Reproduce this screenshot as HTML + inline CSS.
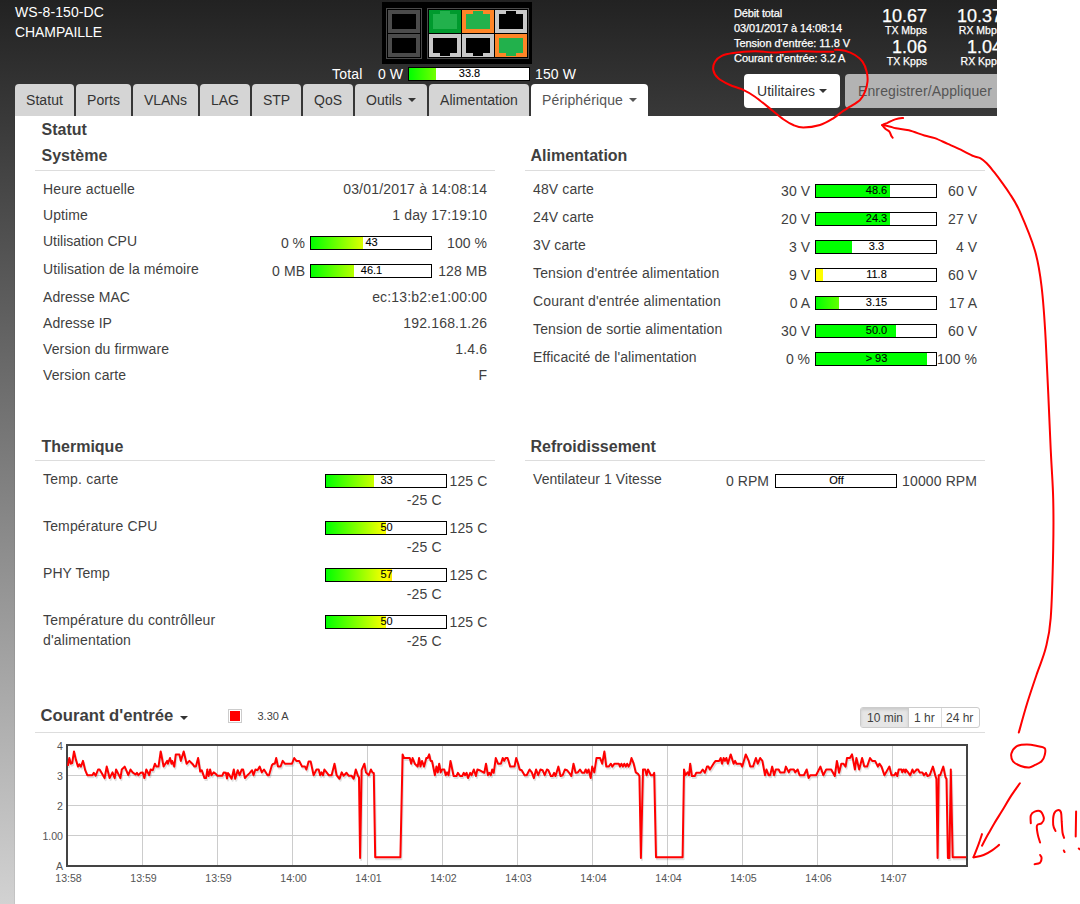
<!DOCTYPE html>
<html><head><meta charset="utf-8">
<style>
*{box-sizing:border-box;margin:0;padding:0}
html,body{width:1080px;height:904px;overflow:hidden;background:#fff}
body{position:relative;font-family:"Liberation Sans",sans-serif;color:#3f3f3f}
.bg{position:absolute;left:0;top:0;width:997px;height:904px;background:linear-gradient(to bottom,#222 0px,#d2d2d2 904px)}
.content{position:absolute;left:15px;top:116px;width:982px;height:788px;background:#fff;box-shadow:-1px 0 0 rgba(0,0,0,0.06)}
.t{position:absolute;white-space:nowrap;line-height:1}
.w{color:#fff;-webkit-text-stroke:0.25px #fff}.w.f14{-webkit-text-stroke:0}
.f14{font-size:14px}.f11{font-size:11px}.f10{font-size:10px}.f16{font-size:16px}.f17{font-size:17px}.f12{font-size:12px}
.b{font-weight:bold}
.r{text-align:right}
.tab{position:absolute;top:84px;height:32px;background:#d5d5d5;border-radius:4px 4px 0 0;font-size:14px;color:#333;text-align:center;line-height:30px;padding-top:1px}
.tab.act{background:#fff;color:#555}
.caret{display:inline-block;width:0;height:0;border-left:4px solid transparent;border-right:4px solid transparent;border-top:4px solid currentColor;vertical-align:middle;margin-left:6px;position:relative;top:-1px}
.port{position:absolute;width:32px;height:23px}
.hr{position:absolute;height:1px;background:#ddd}
.bar{position:absolute;width:122px;height:14px;border:1px solid #000;background:#fff;overflow:hidden}
.fill{position:absolute;left:0;top:0;bottom:0}
.grad{background:linear-gradient(to right,#00ff00 0px,#ffff00 60px,#ff0000 120px);background-size:120px 100%}
.bt{position:absolute;left:0;right:0;top:-1px;padding-left:1px;text-align:center;font-size:11px;line-height:12px;color:#000;-webkit-text-stroke:0.1px #000}
</style></head><body>
<div class="bg"></div>
<div class="content"></div>

<!-- header texts -->
<div class="t w f14" style="left:15px;top:5px;letter-spacing:0.100px">WS-8-150-DC</div>
<div class="t w f14" style="left:15px;top:25px;letter-spacing:-0.070px">CHAMPAILLE</div>

<!-- port graphic -->
<div style="position:absolute;left:382px;top:2px;width:150px;height:62px;background:#000"></div>
<div style="position:absolute;left:386px;top:8px;width:36px;height:51px;border:1px solid #4a4a4a"></div>
<div style="position:absolute;left:427px;top:8px;width:102px;height:51px;border:1px solid #4a4a4a"></div>
<svg style="position:absolute;left:0;top:0" width="540" height="70">
 <!-- SFP -->
 <rect x="388" y="10" width="32" height="23" fill="#4b4b4b"/><rect x="392" y="14" width="24" height="15" fill="#000"/>
 <rect x="388" y="34" width="32" height="23" fill="#4b4b4b"/><rect x="392" y="38" width="24" height="15" fill="#000"/>
 <!-- RJ45 top row -->
 <rect x="429" y="10" width="32" height="23" fill="#009a2e"/><path d="M433 14h7v-3h10v3h7v15h-24z" fill="#22b14c"/>
 <rect x="462" y="10" width="32" height="23" fill="#ff8527"/><path d="M466 14h7v-3h10v3h7v15h-24z" fill="#22b14c"/>
 <rect x="495" y="10" width="32" height="23" fill="#c8c8c8"/><path d="M499 14h7v-3h10v3h7v15h-24z" fill="#000"/>
 <!-- RJ45 bottom row -->
 <rect x="429" y="34" width="32" height="23" fill="#c8c8c8"/><path d="M433 38h24v15h-7v3h-10v-3h-7z" fill="#000"/>
 <rect x="462" y="34" width="32" height="23" fill="#c8c8c8"/><path d="M466 38h24v15h-7v3h-10v-3h-7z" fill="#000"/>
 <rect x="495" y="34" width="32" height="23" fill="#ff8527"/><path d="M499 38h24v15h-7v3h-10v-3h-7z" fill="#22b14c"/>
</svg>

<!-- total power -->
<div class="t w f14" style="left:332px;top:67px;letter-spacing:0.175px">Total</div>
<div class="t w f14" style="left:378px;top:67px;letter-spacing:0.037px">0 W</div>
<div class="bar" style="left:408px;top:67px"><div class="fill grad" style="width:27px"></div><div class="bt">33.8</div></div>
<div class="t w f14" style="left:535px;top:67px;letter-spacing:0.108px">150 W</div>

<!-- right info -->
<div class="t w f11" style="left:734px;top:8px;letter-spacing:-0.139px">Débit total</div>
<div class="t w f11" style="left:734px;top:23px;letter-spacing:-0.100px">03/01/2017 à 14:08:14</div>
<div class="t w f11" style="left:734px;top:38px;letter-spacing:-0.063px">Tension d'entrée: 11.8 V</div>
<div class="t w f11" style="left:734px;top:53px;letter-spacing:-0.061px">Courant d'entrée: 3.2 A</div>

<div class="t w r" style="right:153px;top:7px;font-size:18px">10.67</div>
<div class="t w r" style="right:153px;top:25px;font-size:10.5px">TX Mbps</div>
<div class="t w r" style="right:153px;top:38px;font-size:18px">1.06</div>
<div class="t w r" style="right:153px;top:56px;font-size:10.5px">TX Kpps</div>
<div style="position:absolute;left:940px;top:0;width:57px;height:116px;overflow:hidden">
<div class="t w r" style="right:-5px;top:7px;font-size:18px">10.37</div>
<div class="t w r" style="right:-5px;top:25px;font-size:10.5px">RX Mbps</div>
<div class="t w r" style="right:-5px;top:38px;font-size:18px">1.04</div>
<div class="t w r" style="right:-5px;top:56px;font-size:10.5px">RX Kpps</div>
</div>

<!-- buttons -->
<div style="position:absolute;left:744px;top:74px;width:96px;height:34px;background:#fff;border-radius:4px"></div>
<div class="t f14" style="left:757px;top:84px;color:#333;letter-spacing:0.040px">Utilitaires<span class="caret" style="margin-left:4px"></span></div>
<div style="position:absolute;left:845px;top:74px;width:152px;height:34px;background:#b3b3b3;border-radius:4px 0 0 4px;overflow:hidden"><div class="t f14" style="left:13px;top:10px;color:#555;letter-spacing:0.119px">Enregistrer/Appliquer</div></div>

<!-- tabs -->
<div class="tab" style="left:15px;width:59px;letter-spacing:0.070px">Statut</div>
<div class="tab" style="left:76px;width:55px;letter-spacing:0.065px">Ports</div>
<div class="tab" style="left:133px;width:65px;letter-spacing:-0.114px">VLANs</div>
<div class="tab" style="left:200px;width:50px;letter-spacing:-0.005px">LAG</div>
<div class="tab" style="left:252px;width:49px;letter-spacing:-0.076px">STP</div>
<div class="tab" style="left:303px;width:50px;letter-spacing:-0.005px">QoS</div>
<div class="tab" style="left:355px;width:72px;letter-spacing:0.036px">Outils<span class="caret"></span></div>
<div class="tab" style="left:429px;width:100px;letter-spacing:0.080px">Alimentation</div>
<div class="tab act" style="left:531px;width:117px;letter-spacing:0.135px">Périphérique<span class="caret"></span></div>

<!-- CONTENT -->
<!--SECTIONS-->
<div class="t f16 b" style="top:122px;left:41.5px;">Statut</div>
<div class="t f16 b" style="top:148px;left:41.5px;">Système</div>
<div class="hr" style="left:35px;top:170px;width:460px"></div>
<div class="t f14" style="top:182px;left:43px;letter-spacing:0.123px;">Heure actuelle</div>
<div class="t f14" style="top:182px;right:593px;letter-spacing:0.184px;margin-right:-0.184px;">03/01/2017 à 14:08:14</div>
<div class="t f14" style="top:208px;left:43px;letter-spacing:0.109px;">Uptime</div>
<div class="t f14" style="top:208px;right:593px;letter-spacing:0.169px;margin-right:-0.169px;">1 day 17:19:10</div>
<div class="t f14" style="top:234px;left:43px;letter-spacing:-0.009px;">Utilisation CPU</div>
<div class="t f14" style="top:236px;right:775px;letter-spacing:-0.041px;margin-right:0.041px;">0 %</div>
<div class="bar" style="left:310px;top:236px"><div class="fill grad" style="width:52px"></div><div class="bt">43</div></div>
<div class="t f14" style="top:236px;right:593px;letter-spacing:0.061px;margin-right:-0.061px;">100 %</div>
<div class="t f14" style="top:262px;left:43px;letter-spacing:0.109px;">Utilisation de la mémoire</div>
<div class="t f14" style="top:264px;right:775px;letter-spacing:0.081px;margin-right:-0.081px;">0 MB</div>
<div class="bar" style="left:310px;top:264px"><div class="fill grad" style="width:43px"></div><div class="bt">46.1</div></div>
<div class="t f14" style="top:264px;right:593px;letter-spacing:0.125px;margin-right:-0.125px;">128 MB</div>
<div class="t f14" style="top:290px;left:43px;letter-spacing:0.058px;">Adresse MAC</div>
<div class="t f14" style="top:290px;right:593px;letter-spacing:0.171px;margin-right:-0.171px;">ec:13:b2:e1:00:00</div>
<div class="t f14" style="top:316px;left:43px;letter-spacing:0.052px;">Adresse IP</div>
<div class="t f14" style="top:316px;right:593px;letter-spacing:0.188px;margin-right:-0.188px;">192.168.1.26</div>
<div class="t f14" style="top:342px;left:43px;letter-spacing:0.132px;">Version du firmware</div>
<div class="t f14" style="top:342px;right:593px;letter-spacing:0.172px;margin-right:-0.172px;">1.4.6</div>
<div class="t f14" style="top:368px;left:43px;letter-spacing:0.117px;">Version carte</div>
<div class="t f14" style="top:368px;right:593px;letter-spacing:0.448px;margin-right:-0.448px;">F</div>
<div class="t f16 b" style="top:148px;left:530.5px;">Alimentation</div>
<div class="hr" style="left:525px;top:170px;width:460px"></div>
<div class="t f14" style="top:182px;left:533px;letter-spacing:0.120px;">48V carte</div>
<div class="t f14" style="top:184px;right:270px;letter-spacing:0.050px;margin-right:-0.050px;">30 V</div>
<div class="bar" style="left:815px;top:184px"><div class="fill" style="width:74px;background:#00ff00"></div><div class="bt">48.6</div></div>
<div class="t f14" style="top:184px;right:103px;letter-spacing:0.050px;margin-right:-0.050px;">60 V</div>
<div class="t f14" style="top:210px;left:533px;letter-spacing:0.120px;">24V carte</div>
<div class="t f14" style="top:212px;right:270px;letter-spacing:0.050px;margin-right:-0.050px;">20 V</div>
<div class="bar" style="left:815px;top:212px"><div class="fill" style="width:74px;background:#00ff00"></div><div class="bt">24.3</div></div>
<div class="t f14" style="top:212px;right:103px;letter-spacing:0.050px;margin-right:-0.050px;">27 V</div>
<div class="t f14" style="top:238px;left:533px;letter-spacing:0.108px;">3V carte</div>
<div class="t f14" style="top:240px;right:270px;letter-spacing:-0.005px;margin-right:0.005px;">3 V</div>
<div class="bar" style="left:815px;top:240px"><div class="fill" style="width:36px;background:#00ff00"></div><div class="bt">3.3</div></div>
<div class="t f14" style="top:240px;right:103px;letter-spacing:-0.005px;margin-right:0.005px;">4 V</div>
<div class="t f14" style="top:266px;left:533px;letter-spacing:0.164px;">Tension d'entrée alimentation</div>
<div class="t f14" style="top:268px;right:270px;letter-spacing:-0.005px;margin-right:0.005px;">9 V</div>
<div class="bar" style="left:815px;top:268px"><div class="fill" style="width:7px;background:#ffff00"></div><div class="bt">11.8</div></div>
<div class="t f14" style="top:268px;right:103px;letter-spacing:0.050px;margin-right:-0.050px;">60 V</div>
<div class="t f14" style="top:294px;left:533px;letter-spacing:0.164px;">Courant d'entrée alimentation</div>
<div class="t f14" style="top:296px;right:270px;letter-spacing:-0.005px;margin-right:0.005px;">0 A</div>
<div class="bar" style="left:815px;top:296px"><div class="fill grad" style="width:23px"></div><div class="bt">3.15</div></div>
<div class="t f14" style="top:296px;right:103px;letter-spacing:0.050px;margin-right:-0.050px;">17 A</div>
<div class="t f14" style="top:322px;left:533px;letter-spacing:0.141px;">Tension de sortie alimentation</div>
<div class="t f14" style="top:324px;right:270px;letter-spacing:0.050px;margin-right:-0.050px;">30 V</div>
<div class="bar" style="left:815px;top:324px"><div class="fill" style="width:80px;background:#00ff00"></div><div class="bt">50.0</div></div>
<div class="t f14" style="top:324px;right:103px;letter-spacing:0.050px;margin-right:-0.050px;">60 V</div>
<div class="t f14" style="top:350px;left:533px;letter-spacing:0.092px;">Efficacité de l'alimentation</div>
<div class="t f14" style="top:352px;right:270px;letter-spacing:-0.041px;margin-right:0.041px;">0 %</div>
<div class="bar" style="left:815px;top:352px"><div class="fill" style="width:111px;background:#00ff00"></div><div class="bt">&gt; 93</div></div>
<div class="t f14" style="top:352px;right:103px;letter-spacing:0.061px;margin-right:-0.061px;">100 %</div>
<div class="t f16 b" style="top:439px;left:41.5px;">Thermique</div>
<div class="hr" style="left:35px;top:460px;width:460px"></div>
<div class="t f14" style="top:472px;left:43px;letter-spacing:0.210px;">Temp. carte</div>
<div class="bar" style="left:325px;top:474px"><div class="fill grad" style="width:48px"></div><div class="bt">33</div></div>
<div class="t f14" style="top:474px;left:449.5px;letter-spacing:0.128px;">125 C</div>
<div class="t f14" style="top:493px;right:638.5px;letter-spacing:0.153px;margin-right:-0.153px;">-25 C</div>
<div class="t f14" style="top:519px;left:43px;letter-spacing:0.160px;">Température CPU</div>
<div class="bar" style="left:325px;top:521px"><div class="fill grad" style="width:60px"></div><div class="bt">50</div></div>
<div class="t f14" style="top:521px;left:449.5px;letter-spacing:0.128px;">125 C</div>
<div class="t f14" style="top:540px;right:638.5px;letter-spacing:0.153px;margin-right:-0.153px;">-25 C</div>
<div class="t f14" style="top:566px;left:43px;letter-spacing:0.067px;">PHY Temp</div>
<div class="bar" style="left:325px;top:568px"><div class="fill grad" style="width:66px"></div><div class="bt">57</div></div>
<div class="t f14" style="top:568px;left:449.5px;letter-spacing:0.128px;">125 C</div>
<div class="t f14" style="top:587px;right:638.5px;letter-spacing:0.153px;margin-right:-0.153px;">-25 C</div>
<div class="t f14" style="top:613px;left:43px;letter-spacing:0.198px;">Température du contrôlleur</div>
<div class="bar" style="left:325px;top:615px"><div class="fill grad" style="width:60px"></div><div class="bt">50</div></div>
<div class="t f14" style="top:615px;left:449.5px;letter-spacing:0.128px;">125 C</div>
<div class="t f14" style="top:634px;right:638.5px;letter-spacing:0.153px;margin-right:-0.153px;">-25 C</div>
<div class="t f14" style="top:633px;left:43px;letter-spacing:0.147px;">d'alimentation</div>
<div class="t f16 b" style="top:439px;left:530.5px;">Refroidissement</div>
<div class="hr" style="left:525px;top:460px;width:460px"></div>
<div class="t f14" style="top:472px;left:533px;letter-spacing:0.076px;">Ventilateur 1 Vitesse</div>
<div class="t f14" style="top:474px;right:311px;letter-spacing:0.043px;margin-right:-0.043px;">0 RPM</div>
<div class="bar" style="left:775px;top:474px"><div class="bt">Off</div></div>
<div class="t f14" style="top:474px;right:103px;letter-spacing:0.119px;margin-right:-0.119px;">10000 RPM</div>
<!--/SECTIONS-->
<!--CHART-->
<div class="t f17 b" style="top:708px;left:40.5px;font-size:16.7px;">Courant d'entrée</div>
<div style="position:absolute;left:180px;top:716px;width:0;height:0;border-left:4px solid transparent;border-right:4px solid transparent;border-top:4px solid #333"></div>
<div style="position:absolute;left:228px;top:709px;width:14px;height:14px;border:1px solid #ccc;background:#fff"><div style="position:absolute;left:1px;top:1px;width:10px;height:10px;background:#f00"></div></div>
<div class="t f11" style="top:711px;left:257.5px;">3.30 A</div>
<div class="hr" style="left:35px;top:732px;width:950px"></div>
<div style="position:absolute;left:860px;top:707px;width:120px;height:21px;border:1px solid #ccc;border-radius:3px;background:#fff;overflow:hidden"><div style="position:absolute;left:0;top:0;width:48px;height:19px;background:#e6e6e6;box-shadow:inset 0 2px 3px rgba(0,0,0,.12);border-right:1px solid #ccc"></div><div style="position:absolute;left:80px;top:0;width:1px;height:19px;background:#ddd"></div></div>
<div class="t f12" style="top:712px;left:867px;">10 min</div>
<div class="t f12" style="top:712px;left:914px;">1 hr</div>
<div class="t f12" style="top:712px;left:946px;">24 hr</div>
<div class="t f11" style="top:741px;right:1017px;color:#555;font-size:10.6px;">4</div>
<div class="t f11" style="top:771px;right:1017px;color:#555;font-size:10.6px;">3</div>
<div class="t f11" style="top:801px;right:1017px;color:#555;font-size:10.6px;">2</div>
<div class="t f11" style="top:831px;right:1017px;color:#555;font-size:10.6px;">1.00</div>
<div class="t f11" style="top:861px;right:1017px;color:#555;font-size:10.6px;">A</div>
<div class="t" style="font-size:10.6px;left:38.5px;width:60px;text-align:center;top:873px;color:#555">13:58</div>
<div class="t" style="font-size:10.6px;left:113.5px;width:60px;text-align:center;top:873px;color:#555">13:59</div>
<div class="t" style="font-size:10.6px;left:188.5px;width:60px;text-align:center;top:873px;color:#555">13:59</div>
<div class="t" style="font-size:10.6px;left:263.5px;width:60px;text-align:center;top:873px;color:#555">14:00</div>
<div class="t" style="font-size:10.6px;left:338.5px;width:60px;text-align:center;top:873px;color:#555">14:01</div>
<div class="t" style="font-size:10.6px;left:413.5px;width:60px;text-align:center;top:873px;color:#555">14:02</div>
<div class="t" style="font-size:10.6px;left:488.5px;width:60px;text-align:center;top:873px;color:#555">14:03</div>
<div class="t" style="font-size:10.6px;left:563.5px;width:60px;text-align:center;top:873px;color:#555">14:04</div>
<div class="t" style="font-size:10.6px;left:638.5px;width:60px;text-align:center;top:873px;color:#555">14:04</div>
<div class="t" style="font-size:10.6px;left:713.5px;width:60px;text-align:center;top:873px;color:#555">14:05</div>
<div class="t" style="font-size:10.6px;left:788.5px;width:60px;text-align:center;top:873px;color:#555">14:06</div>
<div class="t" style="font-size:10.6px;left:863.5px;width:60px;text-align:center;top:873px;color:#555">14:07</div>
<svg style="position:absolute;left:0;top:0" width="1080" height="904">
<line x1="68" y1="775.5" x2="966" y2="775.5" stroke="#ccc" stroke-width="1"/>
<line x1="68" y1="805.5" x2="966" y2="805.5" stroke="#ccc" stroke-width="1"/>
<line x1="68" y1="835.5" x2="966" y2="835.5" stroke="#ccc" stroke-width="1"/>
<line x1="142.5" y1="746" x2="142.5" y2="865" stroke="#ccc" stroke-width="1"/>
<line x1="217.5" y1="746" x2="217.5" y2="865" stroke="#ccc" stroke-width="1"/>
<line x1="292.5" y1="746" x2="292.5" y2="865" stroke="#ccc" stroke-width="1"/>
<line x1="367.5" y1="746" x2="367.5" y2="865" stroke="#ccc" stroke-width="1"/>
<line x1="442.5" y1="746" x2="442.5" y2="865" stroke="#ccc" stroke-width="1"/>
<line x1="517.5" y1="746" x2="517.5" y2="865" stroke="#ccc" stroke-width="1"/>
<line x1="592.5" y1="746" x2="592.5" y2="865" stroke="#ccc" stroke-width="1"/>
<line x1="667.5" y1="746" x2="667.5" y2="865" stroke="#ccc" stroke-width="1"/>
<line x1="742.5" y1="746" x2="742.5" y2="865" stroke="#ccc" stroke-width="1"/>
<line x1="817.5" y1="746" x2="817.5" y2="865" stroke="#ccc" stroke-width="1"/>
<line x1="892.5" y1="746" x2="892.5" y2="865" stroke="#ccc" stroke-width="1"/>
<rect x="67" y="745" width="900" height="121" fill="none" stroke="#444" stroke-width="2"/>
<path d="M67.9,765.9 L69.3,758.0 L70.8,763.7 L72.2,763.0 L74.0,751.5 L75.8,759.4 L78.0,766.6 L79.4,764.4 L80.9,766.6 L83.0,760.9 L85.2,770.2 L87.3,775.2 L92.4,775.2 L93.8,772.8 L95.7,775.7 L98.1,769.5 L99.6,769.5 L104.6,778.1 L106.7,766.6 L109.6,778.1 L112.5,772.4 L114.7,778.1 L116.1,769.5 L120.4,778.1 L121.8,769.5 L124.7,766.6 L128.3,775.2 L130.5,769.5 L132.6,772.4 L135.5,774.5 L136.9,772.8 L138.4,775.2 L140.5,772.8 L142.7,772.4 L144.4,778.1 L146.3,769.5 L149.2,775.2 L150.6,769.5 L152.8,770.2 L154.9,763.7 L156.4,766.6 L158.5,766.6 L160.7,751.5 L163.6,766.6 L167.1,760.9 L167.9,763.7 L170.0,758.0 L171.5,763.7 L172.2,760.9 L174.3,766.6 L175.8,754.4 L179.4,754.4 L180.8,760.9 L183.7,751.5 L186.6,763.7 L189.4,760.9 L192.3,763.7 L194.5,766.6 L195.9,766.6 L198.1,758.0 L200.2,771.6 L201.7,770.2 L204.5,778.1 L206.0,778.1 L207.4,769.5 L207.2,770.2 L208.6,776.0 L210.1,769.5 L211.5,775.2 L213.7,772.4 L215.8,773.8 L217.3,775.7 L222.3,775.7 L223.7,772.4 L225.9,772.8 L227.0,778.5 L228.0,773.1 L229.5,775.2 L231.6,778.8 L233.8,769.5 L235.2,778.8 L237.7,770.2 L239.6,775.2 L241.7,769.5 L243.1,769.5 L244.9,778.1 L247.5,775.2 L249.6,773.1 L252.1,770.2 L253.5,775.2 L255.4,769.5 L257.5,770.2 L259.7,766.6 L261.8,772.4 L264.0,769.5 L267.6,775.2 L269.0,775.2 L271.9,765.2 L273.3,763.7 L274.8,763.7 L276.2,758.0 L278.0,766.6 L280.5,766.6 L282.7,760.9 L284.9,763.7 L292.0,763.7 L294.2,758.0 L296.4,760.9 L299.2,760.9 L302.1,766.6 L305.0,766.6 L306.4,769.5 L308.6,761.6 L310.7,761.6 L313.6,775.2 L316.5,769.5 L318.7,769.5 L320.1,775.2 L321.5,772.4 L323.0,775.2 L324.4,769.5 L326.6,772.4 L328.7,775.2 L331.6,775.2 L334.5,763.7 L336.6,775.2 L339.5,778.8 L341.7,772.4 L342.2,773.1 L343.6,775.7 L346.5,772.8 L348.6,775.7 L351.5,775.7 L353.7,778.8 L355.8,769.5 L358.0,776.0 L359.0,777.4 L360.1,857.9 L361.6,770.2 L364.4,763.7 L365.9,772.4 L368.8,775.2 L370.9,769.5 L372.4,772.4 L373.8,773.1 L375.2,857.2 L400.4,857.2 L402.6,754.4 L404.0,758.0 L409.8,758.0 L411.2,763.7 L412.6,758.0 L414.8,763.7 L417.7,766.6 L419.1,758.0 L420.5,766.6 L422.0,760.9 L424.1,766.6 L426.3,758.0 L427.7,758.0 L429.2,754.4 L430.6,760.9 L432.0,760.9 L434.9,775.2 L436.4,766.6 L437.8,772.4 L439.2,763.7 L440.7,772.4 L442.1,769.5 L444.3,769.5 L445.7,775.2 L447.1,772.4 L448.6,775.2 L450.5,760.9 L453.6,776.0 L456.5,776.0 L457.9,772.8 L460.1,776.0 L462.2,776.0 L463.7,772.8 L465.1,775.2 L466.6,772.8 L468.0,778.1 L470.2,772.8 L471.6,775.2 L473.8,769.5 L475.9,776.0 L477.4,769.5 L479.5,770.2 L484.3,772.8 L486.0,763.7 L487.9,775.2 L489.3,772.8 L490.8,775.2 L492.2,769.5 L493.7,772.8 L495.8,758.0 L498.0,763.7 L500.9,763.7 L502.7,758.0 L504.2,760.9 L505.6,758.0 L507.6,758.0 L510.2,766.6 L514.5,766.6 L516.2,758.0 L518.1,763.7 L519.6,769.5 L521.7,770.2 L524.6,775.2 L526.7,775.2 L529.6,769.5 L531.8,772.4 L533.9,778.1 L536.1,769.5 L538.2,775.2 L540.4,769.5 L542.6,770.2 L544.7,775.2 L546.9,769.5 L548.3,770.2 L550.8,776.0 L552.6,776.0 L554.1,772.8 L555.5,776.0 L558.4,766.6 L560.5,776.0 L562.7,775.2 L564.9,769.5 L567.0,770.2 L569.2,772.8 L571.3,776.0 L573.5,763.7 L575.6,772.8 L577.8,772.4 L580.0,769.5 L582.1,772.8 L584.3,772.8 L585.7,769.5 L587.1,772.8 L588.6,769.5 L590.7,778.1 L592.2,766.6 L594.3,772.4 L596.5,758.0 L600.1,758.0 L602.2,763.7 L604.4,751.5 L606.3,766.6 L608.7,766.6 L610.9,763.7 L612.3,766.6 L614.5,763.7 L618.8,763.7 L620.0,766.6 L621.4,763.7 L622.9,766.6 L624.3,763.7 L625.8,766.6 L627.2,763.7 L628.6,766.6 L630.1,763.7 L631.5,758.0 L633.7,763.7 L635.8,772.4 L638.0,773.8 L639.4,776.0 L640.9,857.9 L643.0,769.5 L645.2,769.5 L646.6,775.2 L648.0,769.5 L650.9,775.2 L653.1,775.2 L654.2,772.8 L656.0,857.2 L682.6,857.2 L684.0,769.5 L685.4,775.2 L687.6,772.4 L689.0,775.2 L690.2,763.7 L691.9,776.0 L694.8,776.0 L696.2,772.8 L700.5,772.8 L702.7,769.5 L704.9,772.8 L707.0,766.6 L708.5,766.6 L709.9,769.5 L713.5,763.7 L715.6,760.9 L719.2,760.9 L720.7,758.0 L722.1,763.7 L723.6,758.0 L725.0,760.9 L726.4,758.0 L727.9,763.7 L730.7,754.4 L733.6,763.7 L735.1,760.9 L736.5,763.7 L740.8,763.7 L742.2,766.6 L745.8,754.4 L748.7,760.9 L750.2,766.6 L753.0,766.6 L755.9,758.0 L757.8,763.7 L760.2,758.0 L762.4,760.9 L762.9,763.7 L765.0,775.2 L766.5,769.5 L768.6,775.2 L770.1,775.2 L772.2,766.6 L774.1,775.2 L775.8,769.5 L778.7,769.5 L780.1,772.4 L784.4,772.4 L785.9,766.6 L788.8,772.4 L790.2,769.5 L793.8,769.5 L795.2,772.4 L797.7,769.5 L799.6,775.2 L803.9,775.2 L806.7,769.5 L808.6,778.1 L810.3,775.2 L816.1,775.2 L820.4,766.6 L823.3,775.2 L826.2,769.5 L831.2,769.5 L834.8,776.0 L836.9,760.9 L839.1,772.8 L841.3,763.7 L843.4,763.7 L845.6,766.6 L847.0,758.0 L849.9,758.0 L852.0,754.4 L854.9,769.5 L856.4,758.0 L859.2,769.5 L862.1,758.0 L864.3,766.6 L867.1,766.6 L870.0,758.0 L872.2,760.9 L875.1,760.9 L877.9,766.6 L879.4,763.7 L881.5,766.6 L884.4,775.2 L889.4,766.6 L889.4,766.6 L891.5,775.3 L894.4,775.3 L895.8,772.8 L897.3,776.0 L898.7,769.5 L901.6,769.5 L902.3,772.4 L903.7,769.5 L905.2,772.4 L905.9,769.5 L908.1,772.4 L910.2,775.3 L912.4,769.5 L913.8,772.8 L916.7,769.5 L918.1,769.5 L919.6,772.4 L922.4,772.4 L923.9,775.3 L926.0,772.8 L927.5,776.0 L929.6,775.3 L932.9,766.6 L935.4,776.0 L936.4,778.8 L937.6,858.0 L938.7,775.3 L940.1,775.3 L943.3,766.6 L945.5,777.4 L946.5,778.8 L947.9,858.0 L949.4,858.0 L950.8,769.5 L952.7,857.3 L966.3,857.3" fill="none" stroke="rgba(0,0,0,0.12)" stroke-width="2" transform="translate(1,2)" stroke-linejoin="round"/>
<path d="M67.9,765.9 L69.3,758.0 L70.8,763.7 L72.2,763.0 L74.0,751.5 L75.8,759.4 L78.0,766.6 L79.4,764.4 L80.9,766.6 L83.0,760.9 L85.2,770.2 L87.3,775.2 L92.4,775.2 L93.8,772.8 L95.7,775.7 L98.1,769.5 L99.6,769.5 L104.6,778.1 L106.7,766.6 L109.6,778.1 L112.5,772.4 L114.7,778.1 L116.1,769.5 L120.4,778.1 L121.8,769.5 L124.7,766.6 L128.3,775.2 L130.5,769.5 L132.6,772.4 L135.5,774.5 L136.9,772.8 L138.4,775.2 L140.5,772.8 L142.7,772.4 L144.4,778.1 L146.3,769.5 L149.2,775.2 L150.6,769.5 L152.8,770.2 L154.9,763.7 L156.4,766.6 L158.5,766.6 L160.7,751.5 L163.6,766.6 L167.1,760.9 L167.9,763.7 L170.0,758.0 L171.5,763.7 L172.2,760.9 L174.3,766.6 L175.8,754.4 L179.4,754.4 L180.8,760.9 L183.7,751.5 L186.6,763.7 L189.4,760.9 L192.3,763.7 L194.5,766.6 L195.9,766.6 L198.1,758.0 L200.2,771.6 L201.7,770.2 L204.5,778.1 L206.0,778.1 L207.4,769.5 L207.2,770.2 L208.6,776.0 L210.1,769.5 L211.5,775.2 L213.7,772.4 L215.8,773.8 L217.3,775.7 L222.3,775.7 L223.7,772.4 L225.9,772.8 L227.0,778.5 L228.0,773.1 L229.5,775.2 L231.6,778.8 L233.8,769.5 L235.2,778.8 L237.7,770.2 L239.6,775.2 L241.7,769.5 L243.1,769.5 L244.9,778.1 L247.5,775.2 L249.6,773.1 L252.1,770.2 L253.5,775.2 L255.4,769.5 L257.5,770.2 L259.7,766.6 L261.8,772.4 L264.0,769.5 L267.6,775.2 L269.0,775.2 L271.9,765.2 L273.3,763.7 L274.8,763.7 L276.2,758.0 L278.0,766.6 L280.5,766.6 L282.7,760.9 L284.9,763.7 L292.0,763.7 L294.2,758.0 L296.4,760.9 L299.2,760.9 L302.1,766.6 L305.0,766.6 L306.4,769.5 L308.6,761.6 L310.7,761.6 L313.6,775.2 L316.5,769.5 L318.7,769.5 L320.1,775.2 L321.5,772.4 L323.0,775.2 L324.4,769.5 L326.6,772.4 L328.7,775.2 L331.6,775.2 L334.5,763.7 L336.6,775.2 L339.5,778.8 L341.7,772.4 L342.2,773.1 L343.6,775.7 L346.5,772.8 L348.6,775.7 L351.5,775.7 L353.7,778.8 L355.8,769.5 L358.0,776.0 L359.0,777.4 L360.1,857.9 L361.6,770.2 L364.4,763.7 L365.9,772.4 L368.8,775.2 L370.9,769.5 L372.4,772.4 L373.8,773.1 L375.2,857.2 L400.4,857.2 L402.6,754.4 L404.0,758.0 L409.8,758.0 L411.2,763.7 L412.6,758.0 L414.8,763.7 L417.7,766.6 L419.1,758.0 L420.5,766.6 L422.0,760.9 L424.1,766.6 L426.3,758.0 L427.7,758.0 L429.2,754.4 L430.6,760.9 L432.0,760.9 L434.9,775.2 L436.4,766.6 L437.8,772.4 L439.2,763.7 L440.7,772.4 L442.1,769.5 L444.3,769.5 L445.7,775.2 L447.1,772.4 L448.6,775.2 L450.5,760.9 L453.6,776.0 L456.5,776.0 L457.9,772.8 L460.1,776.0 L462.2,776.0 L463.7,772.8 L465.1,775.2 L466.6,772.8 L468.0,778.1 L470.2,772.8 L471.6,775.2 L473.8,769.5 L475.9,776.0 L477.4,769.5 L479.5,770.2 L484.3,772.8 L486.0,763.7 L487.9,775.2 L489.3,772.8 L490.8,775.2 L492.2,769.5 L493.7,772.8 L495.8,758.0 L498.0,763.7 L500.9,763.7 L502.7,758.0 L504.2,760.9 L505.6,758.0 L507.6,758.0 L510.2,766.6 L514.5,766.6 L516.2,758.0 L518.1,763.7 L519.6,769.5 L521.7,770.2 L524.6,775.2 L526.7,775.2 L529.6,769.5 L531.8,772.4 L533.9,778.1 L536.1,769.5 L538.2,775.2 L540.4,769.5 L542.6,770.2 L544.7,775.2 L546.9,769.5 L548.3,770.2 L550.8,776.0 L552.6,776.0 L554.1,772.8 L555.5,776.0 L558.4,766.6 L560.5,776.0 L562.7,775.2 L564.9,769.5 L567.0,770.2 L569.2,772.8 L571.3,776.0 L573.5,763.7 L575.6,772.8 L577.8,772.4 L580.0,769.5 L582.1,772.8 L584.3,772.8 L585.7,769.5 L587.1,772.8 L588.6,769.5 L590.7,778.1 L592.2,766.6 L594.3,772.4 L596.5,758.0 L600.1,758.0 L602.2,763.7 L604.4,751.5 L606.3,766.6 L608.7,766.6 L610.9,763.7 L612.3,766.6 L614.5,763.7 L618.8,763.7 L620.0,766.6 L621.4,763.7 L622.9,766.6 L624.3,763.7 L625.8,766.6 L627.2,763.7 L628.6,766.6 L630.1,763.7 L631.5,758.0 L633.7,763.7 L635.8,772.4 L638.0,773.8 L639.4,776.0 L640.9,857.9 L643.0,769.5 L645.2,769.5 L646.6,775.2 L648.0,769.5 L650.9,775.2 L653.1,775.2 L654.2,772.8 L656.0,857.2 L682.6,857.2 L684.0,769.5 L685.4,775.2 L687.6,772.4 L689.0,775.2 L690.2,763.7 L691.9,776.0 L694.8,776.0 L696.2,772.8 L700.5,772.8 L702.7,769.5 L704.9,772.8 L707.0,766.6 L708.5,766.6 L709.9,769.5 L713.5,763.7 L715.6,760.9 L719.2,760.9 L720.7,758.0 L722.1,763.7 L723.6,758.0 L725.0,760.9 L726.4,758.0 L727.9,763.7 L730.7,754.4 L733.6,763.7 L735.1,760.9 L736.5,763.7 L740.8,763.7 L742.2,766.6 L745.8,754.4 L748.7,760.9 L750.2,766.6 L753.0,766.6 L755.9,758.0 L757.8,763.7 L760.2,758.0 L762.4,760.9 L762.9,763.7 L765.0,775.2 L766.5,769.5 L768.6,775.2 L770.1,775.2 L772.2,766.6 L774.1,775.2 L775.8,769.5 L778.7,769.5 L780.1,772.4 L784.4,772.4 L785.9,766.6 L788.8,772.4 L790.2,769.5 L793.8,769.5 L795.2,772.4 L797.7,769.5 L799.6,775.2 L803.9,775.2 L806.7,769.5 L808.6,778.1 L810.3,775.2 L816.1,775.2 L820.4,766.6 L823.3,775.2 L826.2,769.5 L831.2,769.5 L834.8,776.0 L836.9,760.9 L839.1,772.8 L841.3,763.7 L843.4,763.7 L845.6,766.6 L847.0,758.0 L849.9,758.0 L852.0,754.4 L854.9,769.5 L856.4,758.0 L859.2,769.5 L862.1,758.0 L864.3,766.6 L867.1,766.6 L870.0,758.0 L872.2,760.9 L875.1,760.9 L877.9,766.6 L879.4,763.7 L881.5,766.6 L884.4,775.2 L889.4,766.6 L889.4,766.6 L891.5,775.3 L894.4,775.3 L895.8,772.8 L897.3,776.0 L898.7,769.5 L901.6,769.5 L902.3,772.4 L903.7,769.5 L905.2,772.4 L905.9,769.5 L908.1,772.4 L910.2,775.3 L912.4,769.5 L913.8,772.8 L916.7,769.5 L918.1,769.5 L919.6,772.4 L922.4,772.4 L923.9,775.3 L926.0,772.8 L927.5,776.0 L929.6,775.3 L932.9,766.6 L935.4,776.0 L936.4,778.8 L937.6,858.0 L938.7,775.3 L940.1,775.3 L943.3,766.6 L945.5,777.4 L946.5,778.8 L947.9,858.0 L949.4,858.0 L950.8,769.5 L952.7,857.3 L966.3,857.3" fill="none" stroke="#f00" stroke-width="2" stroke-linejoin="round"/>
</svg>
<!--/CHART-->
<!--ANNOT-->
<svg style="position:absolute;left:0;top:0" width="1080" height="904"><g fill="none" stroke="#f00" stroke-width="2" stroke-linecap="round" stroke-linejoin="round">
<path d="M835.0,49.7 C836.7,49.9 841.7,49.9 845.0,50.8 C848.3,51.7 852.1,53.2 855.0,55.0 C857.9,56.8 860.5,58.9 862.5,61.7 C864.5,64.5 865.9,68.4 866.7,71.7 C867.5,75.0 867.8,78.4 867.5,81.7 C867.2,85.0 866.2,88.7 865.0,91.7 C863.8,94.8 862.5,97.5 860.0,100.0 C857.5,102.5 852.8,104.9 850.0,106.7 C847.2,108.5 846.1,108.9 843.3,110.8 C840.5,112.7 837.2,115.9 833.3,118.3 C829.4,120.7 825.0,123.5 820.0,125.0 C815.0,126.5 807.8,127.5 803.3,127.5 C798.8,127.5 796.6,126.4 793.3,125.0 C790.0,123.6 786.9,121.7 783.3,119.2 C779.7,116.7 776.4,113.8 771.7,110.0 C767.0,106.2 760.0,100.2 755.0,96.7 C750.0,93.2 745.9,91.2 741.7,89.2 C737.5,87.2 733.9,86.8 730.0,85.0 C726.1,83.2 721.1,80.8 718.3,78.3 C715.5,75.8 713.8,72.8 713.3,70.0 C712.8,67.2 713.6,64.1 715.0,61.7 C716.4,59.3 718.7,57.2 721.7,55.8 C724.8,54.3 727.8,53.8 733.3,53.0 C738.8,52.2 748.0,51.4 755.0,51.3 C762.0,51.2 767.5,52.5 775.0,52.5 C782.5,52.5 793.0,51.4 800.0,51.3 C807.0,51.2 811.2,51.6 816.7,51.7 C822.2,51.8 830.5,51.7 833.3,51.7"/>
<path d="M882.3,125.1 C883.5,125.3 887.1,125.9 889.4,126.4 C891.7,126.9 892.6,127.7 895.9,128.3 C899.1,129.0 904.1,129.1 908.9,130.3 C913.6,131.5 920.1,134.2 924.4,135.5 C928.7,136.8 930.9,136.7 934.8,138.1 C938.7,139.5 943.5,142.0 947.8,143.9 C952.1,145.8 956.4,147.6 960.7,149.7 C965.0,151.8 970.5,154.8 973.7,156.2 C977.0,157.6 978.0,157.0 980.2,158.2 C982.4,159.4 984.3,160.9 986.7,163.3 C989.1,165.7 991.8,169.2 994.4,172.4 C997.0,175.7 999.7,179.3 1002.2,182.8 C1004.7,186.3 1006.5,188.5 1009.4,193.2 C1012.3,197.8 1015.1,201.1 1019.4,210.7 C1023.6,220.2 1031.2,237.9 1034.9,250.5 C1038.6,263.1 1039.7,271.1 1041.5,286.0 C1043.3,300.9 1044.2,312.8 1045.7,340.0 C1047.2,367.2 1049.5,422.7 1050.7,449.2 C1052.0,475.7 1052.8,482.3 1053.2,498.9 C1053.6,515.5 1053.6,528.7 1053.2,548.6 C1052.8,568.5 1052.0,601.6 1050.7,618.2 C1049.5,634.8 1048.0,639.0 1045.7,648.1 C1043.5,657.2 1040.3,663.8 1037.2,672.9 C1034.1,682.0 1030.4,692.8 1027.3,702.8 C1024.2,712.8 1020.2,727.6 1018.8,732.6"/>
<path d="M882.3,125.1 C883.1,124.8 885.3,123.8 886.9,123.1 C888.5,122.3 890.1,121.3 892.0,120.6 C893.9,119.8 896.6,119.0 898.5,118.6 C900.4,118.2 902.3,118.1 903.1,118.0"/>
<path d="M882.3,125.1 C882.8,125.8 884.4,127.9 885.6,129.0 C886.8,130.1 888.4,130.4 889.4,131.6 C890.4,132.8 890.8,135.1 891.4,136.1 C892.0,137.1 892.5,137.4 892.7,137.7"/>
<path d="M1013.0,749.7 C1013.8,749.1 1015.3,746.6 1017.6,745.8 C1019.9,744.9 1023.8,744.6 1026.9,744.6 C1030.0,744.6 1033.2,745.2 1036.2,745.8 C1039.2,746.4 1043.3,746.7 1044.7,748.2 C1046.1,749.8 1045.2,752.9 1044.7,755.1 C1044.2,757.3 1043.3,759.6 1041.6,761.3 C1039.9,763.0 1036.7,764.2 1034.6,765.2 C1032.5,766.2 1031.5,767.4 1029.2,767.5 C1026.9,767.6 1023.4,767.0 1020.7,766.0 C1018.0,765.0 1014.6,763.1 1013.0,761.3 C1011.4,759.5 1011.1,757.0 1011.1,755.1 C1011.1,753.2 1012.7,750.6 1013.0,749.7"/>
<path d="M1019.9,783.3 C1018.5,785.3 1014.4,790.8 1011.4,795.4 C1008.4,800.0 1004.9,806.2 1002.1,810.8 C999.3,815.4 996.7,819.3 994.4,823.2 C992.1,827.1 990.3,830.4 988.2,834.1 C986.1,837.9 983.0,843.8 982.0,845.7"/>
<path d="M982.0,834.1 C981.5,835.6 980.3,839.4 978.9,843.3 C977.5,847.2 974.4,855.0 973.5,857.3"/>
<path d="M973.5,857.3 C975.2,856.9 980.5,856.2 983.6,855.0 C986.7,853.8 989.5,852.0 992.1,850.3 C994.7,848.6 997.9,845.8 999.1,844.9"/>
<path d="M1030.8,823.2 C1030.8,821.9 1030.2,817.4 1030.8,815.5 C1031.4,813.6 1032.9,812.2 1034.6,811.6 C1036.3,811.0 1039.2,810.4 1040.8,811.6 C1042.3,812.8 1043.8,816.7 1043.9,818.6 C1044.0,820.5 1042.8,822.1 1041.6,823.2 C1040.4,824.4 1037.7,823.7 1037.0,825.5 C1036.3,827.3 1037.2,831.2 1037.7,834.1 C1038.2,837.0 1039.7,841.2 1040.1,842.6"/>
<path d="M1040.1,855.0 C1040.3,855.5 1041.6,856.7 1041.6,858.0 C1041.6,859.3 1041.3,861.7 1040.1,862.7 C1038.9,863.7 1035.5,864.0 1034.6,864.2"/>
<path d="M1055.5,831.0 C1055.1,830.0 1053.5,827.6 1053.2,824.8 C1053.0,821.9 1053.2,816.3 1054.0,813.9 C1054.8,811.5 1056.7,810.4 1057.9,810.1 C1059.1,809.9 1060.4,810.5 1061.0,812.4 C1061.6,814.3 1061.5,818.4 1061.7,821.7 C1062.0,825.1 1062.1,829.8 1062.5,832.5 C1062.9,835.2 1063.8,837.0 1064.1,837.9"/>
<path d="M1063.8,850.5 C1063.9,850.8 1064.5,851.8 1064.6,852.0"/>
<path d="M1076.1,811.6 C1076.0,815.7 1075.8,832.3 1075.7,836.4"/>
<path d="M1078.8,848.5 C1078.9,848.6 1079.5,849.1 1079.6,849.2"/>
</g></svg>
<!--/ANNOT-->

</body></html>
